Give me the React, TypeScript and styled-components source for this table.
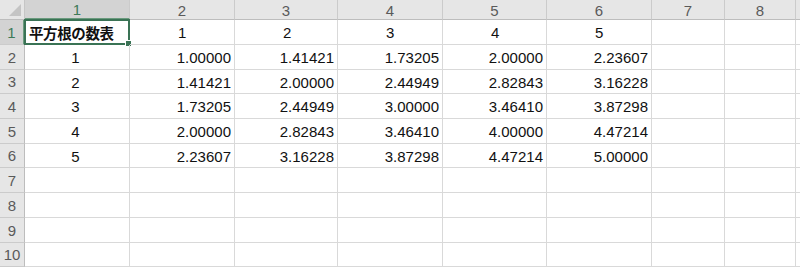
import { styled, createGlobalStyle } from "styled-components";

const GlobalStyle = createGlobalStyle`
  html, body {
    margin: 0;
    padding: 0;
    background: #ffffff;
    overflow: hidden;
  }
  body {
    font-family: "Liberation Sans", Arial, sans-serif;
  }
`;

const COLS = [25, 105, 105, 103, 105, 104, 105, 73, 71, 20];
const ROWS = [25, 25, 24, 25, 25, 24, 25, 25, 25, 24];

const Sheet = styled.div`
  display: grid;
  grid-template-columns: ${COLS.map((c) => `${c}px`).join(" ")};
  grid-template-rows: 20px ${ROWS.map((r) => `${r}px`).join(" ")};
  width: 800px;
  height: 269px;
  overflow: hidden;
`;

const Corner = styled.div`
  position: relative;
  background: #e6e6e6;
  border-right: 1px solid #c6c6c6;
  border-bottom: 1px solid #bdbdbd;
  box-sizing: border-box;

  &::after {
    content: "";
    position: absolute;
    right: 3px;
    bottom: 3px;
    width: 0;
    height: 0;
    border-left: 12px solid transparent;
    border-bottom: 12px solid #c4c4c4;
  }
`;

const ColHead = styled.div<{ $selected?: boolean }>`
  display: flex;
  align-items: center;
  justify-content: center;
  background: ${(p) => (p.$selected ? "#d3d3d3" : "#e6e6e6")};
  color: ${(p) => (p.$selected ? "#3d7a58" : "#5a5a5a")};
  border-right: 1px solid #cbcbcb;
  border-bottom: ${(p) => (p.$selected ? "2px solid #6a9a7d" : "1px solid #bdbdbd")};
  box-sizing: border-box;
  font-size: 15px;
  padding-top: 1px;
`;

const RowHead = styled.div<{ $selected?: boolean }>`
  display: flex;
  align-items: center;
  justify-content: center;
  background: ${(p) => (p.$selected ? "#d3d3d3" : "#e6e6e6")};
  color: ${(p) => (p.$selected ? "#3d7a58" : "#5a5a5a")};
  border-right: ${(p) => (p.$selected ? "2px solid #6a9a7d" : "1px solid #bdbdbd")};
  border-bottom: 1px solid #cbcbcb;
  box-sizing: border-box;
  font-size: 15px;
`;

const Cell = styled.div<{ $align?: "left" | "center" | "right" }>`
  position: relative;
  display: flex;
  align-items: center;
  justify-content: ${(p) =>
    p.$align === "center" ? "center" : p.$align === "right" ? "flex-end" : "flex-start"};
  padding: ${(p) => (p.$align === "left" ? "1px 0 0 48px" : "1px 3px 0 0")};
  border-right: 1px solid #d9d9d9;
  border-bottom: 1px solid #d9d9d9;
  box-sizing: border-box;
  font-size: 15px;
  color: #111111;
  white-space: nowrap;
`;

const Title = styled.span`
  font-family: "Noto Sans CJK JP", "Noto Sans CJK SC", sans-serif;
  font-weight: 700;
  font-size: 14.5px;
  color: #111111;
  letter-spacing: -0.4px;
`;

const TitleCell = styled(Cell)`
  justify-content: flex-start;
  padding: 0 0 0 4px;
`;

const Selection = styled.div`
  position: absolute;
  left: -1px;
  top: -1px;
  right: -1px;
  bottom: -1px;
  border: 2px solid #3a7355;
  pointer-events: none;
`;

const Handle = styled.div`
  position: absolute;
  right: -4px;
  bottom: -4px;
  width: 5px;
  height: 5px;
  background: #3a7355;
  border: 1px solid #ffffff;
`;

export default function App() {
  const colCount = COLS.length - 1;
  const rows = ROWS.map((_, r) => r + 1);

  const renderCell = (row: number, col: number) => {
    const key = `${row}-${col}`;
    if (row === 1 && col === 1) {
      return (
        <TitleCell key={key}>
          <Title>平方根の数表</Title>
          <Selection>
            <Handle />
          </Selection>
        </TitleCell>
      );
    }
    if (row === 1 && col >= 2 && col <= 6) {
      return (
        <Cell key={key} $align="left">
          {col - 1}
        </Cell>
      );
    }
    if (row >= 2 && row <= 6 && col === 1) {
      return (
        <Cell key={key} $align="center">
          {row - 1}
        </Cell>
      );
    }
    if (row >= 2 && row <= 6 && col >= 2 && col <= 6) {
      const v = Math.sqrt((row - 1) * (col - 1)).toFixed(5);
      return (
        <Cell key={key} $align="right">
          {v}
        </Cell>
      );
    }
    return <Cell key={key} />;
  };

  return (
    <>
      <GlobalStyle />
      <Sheet>
        <Corner />
        {Array.from({ length: colCount }, (_, i) => (
          <ColHead key={`h${i}`} $selected={i === 0}>
            {i < 8 ? i + 1 : ""}
          </ColHead>
        ))}
        {rows.map((row) => [
          <RowHead key={`r${row}`} $selected={row === 1}>
            {row}
          </RowHead>,
          ...Array.from({ length: colCount }, (_, c) => renderCell(row, c + 1)),
        ])}
      </Sheet>
    </>
  );
}
